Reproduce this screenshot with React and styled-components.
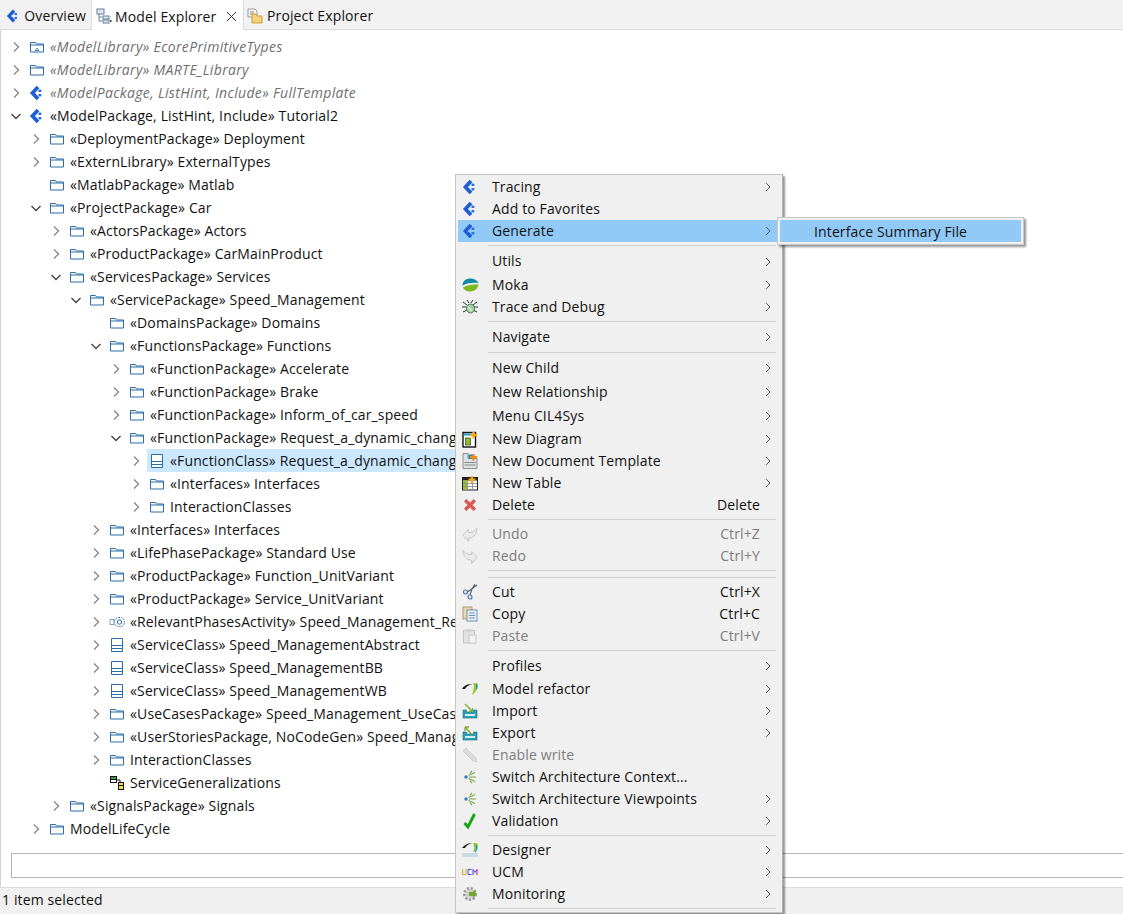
import React from "react";
import styled, { createGlobalStyle } from "styled-components";

const FONT = `"Open Sans", "Noto Sans", "Liberation Sans", sans-serif`;

const Global = createGlobalStyle`
  html, body { margin: 0; padding: 0; background: #fff; }
  body { font-family: ${FONT}; font-size: 14px; letter-spacing: 0.13px; color: #111; overflow: hidden; }
  #root { width: 1123px; height: 914px; }
`;

const Page = styled.div`
  position: relative;
  width: 1123px;
  height: 914px;
  display: flex;
  flex-direction: column;
  overflow: hidden;
  background: #fff;
`;
const TabBar = styled.div`
  height: 29px;
  flex: none;
  display: flex;
  background: #f2f2f2;
  border-bottom: 1px solid #dcdcdc;
`;
const Tab = styled.div`
  display: flex;
  align-items: center;
  gap: ${(p) => p.$gap || 4}px;
  padding: 2px ${(p) => p.$right || 5}px 0 ${(p) => p.$left || 6}px;
  width: ${(p) => p.$w}px;
  box-sizing: border-box;
  background: ${(p) => (p.$active ? "#fff" : "transparent")};
  border-left: ${(p) => (p.$active ? "1px solid #dcdcdc" : "0")};
  border-right: ${(p) => (p.$active ? "1px solid #dcdcdc" : "0")};
  height: ${(p) => (p.$active ? "30px" : "29px")};
  white-space: nowrap;
`;
const Close = styled.span`
  margin-left: auto;
  display: flex;
`;
const Panel = styled.div`
  flex: 1;
  min-height: 0;
  display: flex;
  flex-direction: column;
  border-left: 1px solid #d4d4d4;
`;
const Tree = styled.div`
  flex: 1;
  padding-top: 5px;
  min-height: 0;
`;
const Row = styled.div`
  display: flex;
  align-items: center;
  height: 23px;
  padding-left: ${(p) => 9 + p.$level * 20}px;
  white-space: nowrap;
  color: ${(p) => (p.$muted ? "#6f6f6f" : "#111")};
  font-style: ${(p) => (p.$muted ? "italic" : "normal")};
  letter-spacing: ${(p) => (p.$muted ? "0.33px" : "inherit")};
`;
const Twisty = styled.span`
  width: 12px;
  height: 12px;
  flex: none;
  display: flex;
  align-items: center;
  justify-content: center;
`;
const NodeIcon = styled.span`
  width: 16px;
  height: 16px;
  margin-left: 7px;
  flex: none;
  display: flex;
  align-items: center;
  justify-content: center;
`;
const Label = styled.span`
  margin-left: 5px;
  line-height: 23px;
`;
const SelWrap = styled.span`
  display: flex;
  align-items: center;
  height: 23px;
  margin-left: 5px;
  background: #cce8ff;
  padding: 0 20px 0 2px;
`;
const SelText = styled.span`
  margin-left: 5px;
`;
const FilterWrap = styled.div`
  flex: none;
  padding: 0 0 9px 10px;
`;
const Filter = styled.div`
  height: 23px;
  border: 1px solid #b4b4b4;
  border-right: 0;
  background: #fff;
`;
const Status = styled.div`
  flex: none;
  height: 27px;
  box-sizing: border-box;
  background: #f0f0f0;
  border-top: 1px solid #dcdcdc;
  margin-left: -1px;
  padding: 0 0 3px 2px;
  display: flex;
  align-items: center;
`;
const Menu = styled.div`
  position: absolute;
  left: 455px;
  top: 174px;
  width: 328px;
  height: 739px;
  box-sizing: border-box;
  padding: 1px 6px 0 2px;
  background: #f0f0f0;
  border: 1px solid #c4c4c4;
  border-right-color: #b0b0b0;
  box-shadow: 2px 2px 2px rgba(0, 0, 0, 0.42);
`;
const Item = styled.div`
  position: relative;
  display: flex;
  align-items: center;
  height: ${(p) => p.$h || 22}px;
  width: ${(p) => (p.$hot ? "319px" : "auto")};
  background: ${(p) => (p.$hot ? "#91c9f7" : "transparent")};
  color: ${(p) => (p.$off ? "#7d7d7d" : "#111")};
  white-space: nowrap;
`;
const ItemIcon = styled.span`
  width: 24px;
  height: 22px;
  flex: none;
  display: flex;
  align-items: center;
  justify-content: center;
`;
const ItemText = styled.span`
  margin-left: 10px;
  padding-bottom: 2px;
`;
const Shortcut = styled.span`
  position: absolute;
  right: 16px;
  padding-bottom: 2px;
  color: inherit;
`;
const Arrow = styled.span`
  position: absolute;
  left: 307px;
  top: 50%;
  margin-top: -5px;
  display: flex;
`;
const Sep = styled.div`
  height: 7px;
  display: flex;
  align-items: flex-start;
  padding-left: 30px;
  box-sizing: border-box;
  &::after {
    content: "";
    display: block;
    width: 100%;
    margin-top: 3px;
    height: 1px;
    background: #d0d0d0;
  }
`;
const Sub = styled.div`
  position: absolute;
  left: 777px;
  top: 217px;
  width: 247px;
  height: 28px;
  box-sizing: border-box;
  padding: 2px;
  background: #f0f0f0;
  border: 1px solid #c8c8c8;
  box-shadow: 2px 2px 2px rgba(0, 0, 0, 0.42);
`;
const SubItem = styled.div`
  height: 100%;
  background: #91c9f7;
  display: flex;
  align-items: center;
  padding-left: 34px;
`;

/* ---------- icons ---------- */
const Chev = ({ open, color = "#8a8a8a" }) =>
  open ? (
    <svg width="12" height="12" viewBox="0 0 12 12">
      <path d="M1.5 4 6 8.5 10.5 4" fill="none" stroke="#444" strokeWidth="1.4" />
    </svg>
  ) : (
    <svg width="12" height="12" viewBox="0 0 12 12">
      <path d="M4 1.500 8.500 6 4 10.500" fill="none" stroke={color} strokeWidth="1.4" />
    </svg>
  );
const Folder = ({ inner }) => (
  <svg width="16" height="16" viewBox="0 0 16 16">
    <path d="M1.500 3.500h5l1 1.500h7v8h-13z M1.500 6h13" fill="#fff" stroke="#2a6da8" strokeWidth="1" />
    {inner && <path d="M6 11.500l2-2.500 2 2.500z" fill="none" stroke="#2a6da8" strokeWidth=".8" />}
  </svg>
);
const ClassIcon = () => (
  <svg width="16" height="16" viewBox="0 0 16 16">
    <path d="M2.500 1.500h11v13h-11z" fill="#fff" stroke="#2a6da8" />
    <path d="M3 8.500h10M3 11.500h10" stroke="#2a6da8" fill="none" />
  </svg>
);
const CapLogo = () => (
  <svg width="16" height="16" viewBox="0 0 16 16">
    <path d="M9 2 3.500 8 9 14" fill="none" stroke="#1f5fd6" strokeWidth="3.800" />
    <rect x="9.500" y="4.600" width="2.800" height="2.400" fill="#2a6ee0" />
    <rect x="9.500" y="9" width="2.800" height="2.400" fill="#2a6ee0" />
    <path d="M6.200 6.800 7.600 8 6.200 9.200z" fill="#a8c6f8" />
  </svg>
);
const Activity = () => (
  <svg width="16" height="16" viewBox="0 0 16 16">
    <rect x="5.500" y="3.500" width="10" height="9" rx="4" fill="none" stroke="#2a6da8" strokeDasharray="1.500 1" />
    <circle cx="10.500" cy="8" r="2.200" fill="none" stroke="#2a6da8" />
    <path d="M1 5.500h4v5H1z" fill="none" stroke="#5a8fc0" strokeWidth=".8" />
  </svg>
);
const Gens = () => (
  <svg width="16" height="16" viewBox="0 0 16 16">
    <rect x="1" y="1" width="7" height="7" fill="#111" />
    <rect x="2" y="2" width="5" height="2" fill="#3a9b4a" />
    <rect x="2" y="5" width="5" height="2" fill="#fff" />
    <rect x="9" y="7" width="6" height="8" fill="#111" />
    <rect x="10" y="8" width="4" height="2" fill="#f2e23a" />
    <rect x="10" y="11" width="4" height="3" fill="#f2e23a" />
    <path d="M8 5h3v2" stroke="#111" fill="none" />
  </svg>
);
const Moka = () => (
  <svg width="17" height="14" viewBox="0 0 17 14">
    <path d="M.5 7.500C.5 3 4 .5 8.500.5c3.500 0 6.500 1.500 8 4.500C11 4.500 5 5 .5 7.500z" fill="#1488a8" />
    <path d="M.8 9.500C5 7 11 6.500 16.500 6.500 16 10.500 12.500 13.500 8.500 13.500 5 13.500 2 12 .8 9.500z" fill="#7cb81e" />
  </svg>
);
const Bug = () => (
  <svg width="16" height="16" viewBox="0 0 16 16">
    <path d="M1 3l4 3M15 3l-4 3M0 8h4M16 8h-4M1 13l4-2M15 13l-4-2M5 1l2 3M11 1L9 4" stroke="#1f3a2a" strokeWidth="1" fill="none" />
    <ellipse cx="8.500" cy="9.500" rx="4" ry="4.500" fill="#a4d0a0" stroke="#3d6d5d" strokeWidth=".9" />
    <path d="M6 8l4 4" stroke="#e0f4dc" strokeWidth="1.200" />
  </svg>
);
const NewDiagram = () => (
  <svg width="16" height="17" viewBox="0 0 16 17">
    <rect x="1" y="1.500" width="12.500" height="14.500" fill="#fff" stroke="#111" strokeWidth="1.400" />
    <rect x="2" y="2.500" width="8" height="2" fill="#1a98b8" />
    <rect x="3.500" y="7" width="5" height="7" fill="#8cc020" stroke="#222" strokeWidth=".6" />
    <path d="M11.500 1v6.500M8 4.200h7" stroke="#f4a818" strokeWidth="2.200" />
  </svg>
);
const NewDoc = () => (
  <svg width="16" height="16" viewBox="0 0 16 16">
    <path d="M1 .5h5v5h9v10H1z" fill="#dde0e3" stroke="#8a8f94" />
    <path d="M2.500 9.500h11M2.500 12h11" stroke="#8a8a8a" />
    <rect x="6.500" y="1.500" width="5" height="4.500" fill="#1a8ab0" />
    <path d="M11.500 1v6.500M8 4.200h7" stroke="#f48a18" strokeWidth="2.200" />
  </svg>
);
const NewTable = () => (
  <svg width="16" height="15" viewBox="0 0 16 15">
    <rect x=".5" y="1.500" width="15" height="12.500" fill="#f6f6f6" stroke="#222" />
    <rect x="1" y="2" width="14" height="2.500" fill="#222" />
    <rect x="1" y="4.500" width="4" height="9" fill="#96c42a" />
    <path d="M5.500 4v10M10.500 4v10M1 7.500h14M1 10.500h14" stroke="#888" strokeWidth=".8" />
    <path d="M10 0v7M6.500 3.500h7" stroke="#f4a818" strokeWidth="2.200" />
  </svg>
);
const Cross = () => (
  <svg width="14" height="14" viewBox="0 0 14 14">
    <path d="M2.200 2.200l9.600 9.600M11.800 2.200l-9.600 9.600" stroke="#dd5555" strokeWidth="3.400" />
  </svg>
);
const Undo = ({ flip }) => (
  <svg width="16" height="15" viewBox="0 0 16 15" style={flip ? { transform: "scaleX(-1)" } : undefined}>
    <path d="M.8 8l5.500-5.500v3.200c3.500 0 6.500-1.200 8.700-4.200 0 6-4 9.500-8.700 9.800V14.500z" fill="#ebebeb" stroke="#c6c6c6" />
  </svg>
);
const Cut = () => (
  <svg width="16" height="16" viewBox="0 0 16 16">
    <circle cx="3.500" cy="8" r="2" fill="none" stroke="#4a78a8" strokeWidth="1.200" />
    <circle cx="8" cy="13" r="2" fill="none" stroke="#4a78a8" strokeWidth="1.200" />
    <path d="M5.500 8L15 1M8 11l2-6 3-5" stroke="#55606a" strokeWidth="1.100" fill="none" />
  </svg>
);
const Copy = () => (
  <svg width="16" height="16" viewBox="0 0 16 16">
    <rect x="1" y="1" width="9" height="12" fill="#e8d8b0" stroke="#b09a68" />
    <rect x="5" y="4" width="10" height="11" fill="#eef4fb" stroke="#6a8db0" />
    <path d="M7 7h6M7 9.500h6M7 12h6" stroke="#6a8db0" />
  </svg>
);
const Paste = () => (
  <svg width="16" height="16" viewBox="0 0 16 16">
    <rect x="1.500" y="2.500" width="11" height="12.500" fill="#e2e2e2" stroke="#c4c4c4" />
    <rect x="4" y="1" width="6" height="3" fill="#d4d4d4" />
    <rect x="7" y="7" width="7" height="8" fill="#f3f3f3" stroke="#c8c8c8" />
  </svg>
);
const Refactor = () => (
  <svg width="16" height="14" viewBox="0 0 16 14">
    <path d="M0 7c2-4 6-5 10-5-3 1-5 2-7 5z" fill="#222" />
    <path d="M11 1c3 0 5 0 5 2 0 4-3 8-6 10 1-4 3-7 1-12z" fill="#9acb2c" />
    <path d="M14 2c1 1 1 3 0 5" stroke="#2a9ac8" strokeWidth="1.500" fill="none" />
  </svg>
);
const Tray = ({ out }) => (
  <svg width="16" height="16" viewBox="0 0 16 16">
    <path d="M1 7v8h14V7h-3.500v2H4.500V7z" fill="#2f9fb8" stroke="#10708a" strokeWidth=".6" />
    <rect x="3" y="11" width="10" height="2" fill="#d8f0f6" />
    {out ? (
      <path d="M10 10L4 3M3 2v4M3 2h4" stroke="#7aa82a" strokeWidth="1.300" fill="none" />
    ) : (
      <path d="M3 1l7 7M10.500 8.500V5M10.500 8.500H7" stroke="#7aa82a" strokeWidth="1.300" fill="none" />
    )}
  </svg>
);
const Pencil = () => (
  <svg width="16" height="16" viewBox="0 0 16 16">
    <path d="M1 4l3-3 10 10 1 4-4-1z" fill="#dcdcdc" stroke="#cfcfcf" />
  </svg>
);
const Arch = () => (
  <svg width="14" height="14" viewBox="0 0 14 14">
    <circle cx="3" cy="7" r="1.700" fill="#2f7fb8" />
    <path d="M6 7h7M5.500 5.500L12 2.500M5.500 8.500L12 11.500M7 3.500L9 .8M7 10.500L9 13.200" stroke="#7fa84a" strokeWidth="1.200" />
  </svg>
);
const Check = () => (
  <svg width="14" height="16" viewBox="0 0 14 16">
    <path d="M1.500 10l3.500 4L11.500 1" fill="none" stroke="#12a512" strokeWidth="2.800" />
  </svg>
);
const Designer = () => (
  <svg width="16" height="16" viewBox="0 0 16 16">
    <path d="M0 6c2-3 6-5 10-5-3 1-5 2-7 5z" fill="#222" />
    <path d="M11 1c3 0 5 0 5 2 0 3-2 5-5 7 1-3 2-5 0-9z" fill="#9acb2c" />
    <path d="M14 3c1 2 1 5-1 7" stroke="#2a9ac8" strokeWidth="1.500" fill="none" />
    <rect x="0" y="11" width="16" height="4" fill="#c9dce4" />
  </svg>
);
const Ucm = () => (
  <svg width="16" height="8" viewBox="0 0 16 8">
    <path d="M.5 1v5.500h3.500V1" fill="none" stroke="#e8a020" />
    <path d="M9.500 1.500H6v5h3.500" fill="none" stroke="#2a60d0" />
    <path d="M11 7V1.500l2 3 2-3V7" fill="none" stroke="#7a30d8" />
  </svg>
);
const Gear = () => (
  <svg width="16" height="16" viewBox="0 0 16 16">
    <circle cx="8" cy="8" r="5.500" fill="none" stroke="#9a9a9a" strokeWidth="3" strokeDasharray="2.200 1.500" />
    <circle cx="8" cy="8" r="4.500" fill="#cfcfcf" />
    <path d="M7 6h4V4l4 4-4 4v-2H7z" fill="#6ea62c" />
  </svg>
);
const ModelExplorerIcon = () => (
  <svg width="16" height="16" viewBox="0 0 16 16">
    <rect x="1" y="1" width="7" height="5" fill="#dbe8f4" stroke="#6a7f95" />
    <path d="M3 6v7h3M3 9h3" stroke="#6a7f95" fill="none" />
    <rect x="7" y="8" width="6" height="3" fill="#dbe8f4" stroke="#6a7f95" />
    <rect x="7" y="12" width="6" height="3" fill="#dbe8f4" stroke="#6a7f95" />
    <rect x="14" y="12" width="1.500" height="2" fill="#444" />
  </svg>
);
const ProjectExplorerIcon = () => (
  <svg width="16" height="16" viewBox="0 0 16 16">
    <path d="M1 1h7l2 2v6H1z" fill="#f4f4f4" stroke="#9a9a9a" />
    <path d="M3 4h4M3 6h4" stroke="#8a8a8a" />
    <path d="M5 6h4l1 2h5v7H5z" fill="#f7d27a" stroke="#c8a040" />
  </svg>
);
const CloseX = () => (
  <svg width="11" height="11" viewBox="0 0 11 11">
    <path d="M1 1l9 9M10 1l-9 9" stroke="#333" strokeWidth="1" />
  </svg>
);
const MenuArrow = () => (
  <svg width="6" height="10" viewBox="0 0 6 10">
    <path d="M1 1l4 4-4 4" fill="none" stroke="#555" strokeWidth="1" />
  </svg>
);

/* ---------- data ---------- */
const F = <Folder />;
const C = <ClassIcon />;
const tree = [
  [0, "c", <Folder inner />, "«ModelLibrary» EcorePrimitiveTypes", true],
  [0, "c", F, "«ModelLibrary» MARTE_Library", true],
  [0, "c", <CapLogo />, "«ModelPackage, ListHint, Include» FullTemplate", true],
  [0, "o", <CapLogo />, "«ModelPackage, ListHint, Include» Tutorial2"],
  [1, "c", F, "«DeploymentPackage» Deployment"],
  [1, "c", F, "«ExternLibrary» ExternalTypes"],
  [1, "", F, "«MatlabPackage» Matlab"],
  [1, "o", F, "«ProjectPackage» Car"],
  [2, "c", F, "«ActorsPackage» Actors"],
  [2, "c", F, "«ProductPackage» CarMainProduct"],
  [2, "o", F, "«ServicesPackage» Services"],
  [3, "o", F, "«ServicePackage» Speed_Management"],
  [4, "", F, "«DomainsPackage» Domains"],
  [4, "o", F, "«FunctionsPackage» Functions"],
  [5, "c", F, "«FunctionPackage» Accelerate"],
  [5, "c", F, "«FunctionPackage» Brake"],
  [5, "c", F, "«FunctionPackage» Inform_of_car_speed"],
  [5, "o", F, "«FunctionPackage» Request_a_dynamic_chang"],
  [6, "c", C, "«FunctionClass» Request_a_dynamic_chang", false, true],
  [6, "c", F, "«Interfaces» Interfaces"],
  [6, "c", F, "InteractionClasses"],
  [4, "c", F, "«Interfaces» Interfaces"],
  [4, "c", F, "«LifePhasePackage» Standard Use"],
  [4, "c", F, "«ProductPackage» Function_UnitVariant"],
  [4, "c", F, "«ProductPackage» Service_UnitVariant"],
  [4, "c", <Activity />, "«RelevantPhasesActivity» Speed_Management_Re"],
  [4, "c", C, "«ServiceClass» Speed_ManagementAbstract"],
  [4, "c", C, "«ServiceClass» Speed_ManagementBB"],
  [4, "c", C, "«ServiceClass» Speed_ManagementWB"],
  [4, "c", F, "«UseCasesPackage» Speed_Management_UseCas"],
  [4, "c", F, "«UserStoriesPackage, NoCodeGen» Speed_Manag"],
  [4, "c", F, "InteractionClasses"],
  [4, "", <Gens />, "ServiceGeneralizations"],
  [2, "c", F, "«SignalsPackage» Signals"],
  [1, "c", F, "ModelLifeCycle"],
];

const menu = [
  { t: "Tracing", i: <CapLogo />, a: 1 },
  { t: "Add to Favorites", i: <CapLogo /> },
  { t: "Generate", i: <CapLogo />, a: 1, hot: 1 },
  { sep: 1 },
  { t: "Utils", a: 1, h: 25 },
  { t: "Moka", i: <Moka />, a: 1 },
  { t: "Trace and Debug", i: <Bug />, a: 1 },
  { sep: 1 },
  { t: "Navigate", a: 1, h: 24 },
  { sep: 1 },
  { t: "New Child", a: 1, h: 24 },
  { t: "New Relationship", a: 1, h: 24 },
  { t: "Menu CIL4Sys", a: 1, h: 24 },
  { t: "New Diagram", i: <NewDiagram />, a: 1 },
  { t: "New Document Template", i: <NewDoc />, a: 1 },
  { t: "New Table", i: <NewTable />, a: 1 },
  { t: "Delete", i: <Cross />, s: "Delete" },
  { sep: 1 },
  { t: "Undo", i: <Undo />, s: "Ctrl+Z", off: 1 },
  { t: "Redo", i: <Undo flip />, s: "Ctrl+Y", off: 1 },
  { sep: 1 },
  { sep: 1 },
  { t: "Cut", i: <Cut />, s: "Ctrl+X" },
  { t: "Copy", i: <Copy />, s: "Ctrl+C" },
  { t: "Paste", i: <Paste />, s: "Ctrl+V", off: 1 },
  { sep: 1 },
  { t: "Profiles", a: 1, h: 24 },
  { t: "Model refactor", i: <Refactor />, a: 1 },
  { t: "Import", i: <Tray />, a: 1 },
  { t: "Export", i: <Tray out />, a: 1 },
  { t: "Enable write", i: <Pencil />, off: 1 },
  { t: "Switch Architecture Context...", i: <Arch /> },
  { t: "Switch Architecture Viewpoints", i: <Arch />, a: 1 },
  { t: "Validation", i: <Check />, a: 1 },
  { sep: 1 },
  { t: "Designer", i: <Designer />, a: 1 },
  { t: "UCM", i: <Ucm />, a: 1 },
  { t: "Monitoring", i: <Gear />, a: 1 },
  { sep: 1 },
];

export default function App() {
  return (
    <Page>
      <Global />
      <TabBar>
        <Tab $w={91}>
          <CapLogo />
          Overview
        </Tab>
        <Tab $w={153} $active $left={4} $gap={3} $right={6}>
          <ModelExplorerIcon />
          Model Explorer
          <Close>
            <CloseX />
          </Close>
        </Tab>
        <Tab $w={140} $left={3} $right={4}>
          <ProjectExplorerIcon />
          Project Explorer
        </Tab>
      </TabBar>
      <Panel>
        <Tree>
          {tree.map(([level, state, icon, text, muted, sel], i) => (
            <Row key={i} $level={level} $muted={muted}>
              <Twisty>{state && <Chev open={state === "o"} />}</Twisty>
              {sel ? (
                <SelWrap>
                  {icon}
                  <SelText>{text}</SelText>
                </SelWrap>
              ) : (
                <>
                  <NodeIcon>{icon}</NodeIcon>
                  <Label>{text}</Label>
                </>
              )}
            </Row>
          ))}
        </Tree>
        <FilterWrap>
          <Filter />
        </FilterWrap>
        <Status>1 item selected</Status>
      </Panel>
      <Menu>
        {menu.map((m, i) =>
          m.sep ? (
            <Sep key={i} />
          ) : (
            <Item key={i} $h={m.h} $hot={m.hot} $off={m.off}>
              <ItemIcon>{m.i}</ItemIcon>
              <ItemText>{m.t}</ItemText>
              {m.s && <Shortcut>{m.s}</Shortcut>}
              {m.a && (
                <Arrow>
                  <MenuArrow />
                </Arrow>
              )}
            </Item>
          )
        )}
      </Menu>
      <Sub>
        <SubItem>Interface Summary File</SubItem>
      </Sub>
    </Page>
  );
}
